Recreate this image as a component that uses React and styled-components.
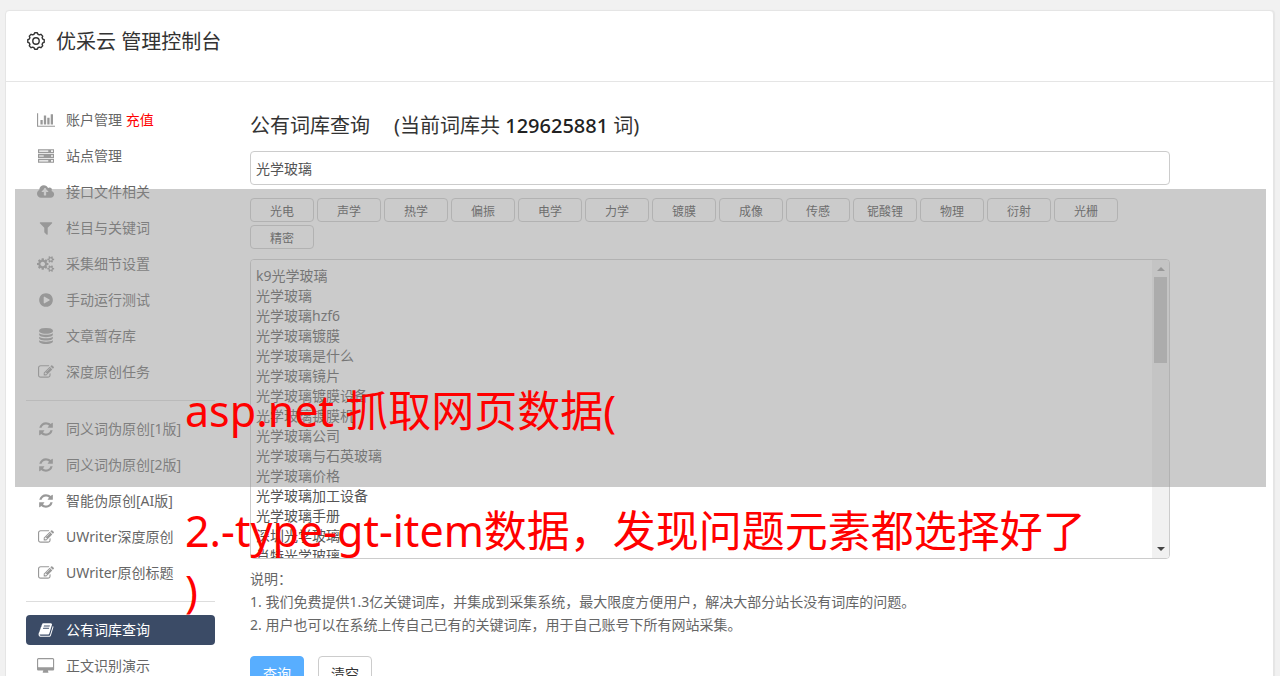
import React from "react";
import styled, { createGlobalStyle, css } from "styled-components";

const GlobalStyle = createGlobalStyle`
  *, *::before, *::after { box-sizing: border-box; }
  body {
    margin: 0;
    background: #f1f1f1;
    color: #666;
    font-family: "Noto Sans", "Noto Sans CJK SC", sans-serif;
    font-size: 14px;
    line-height: 20px;
    font-kerning: none;
  }
  button, input, textarea { font-family: inherit; }
`;

/* ---------- icons ---------- */

const Glyph = styled.svg`
  display: block;
  height: 16px;
  width: auto;
  fill: currentColor;
`;

const PATHS = {
  upload: "M1216 864q0-14-9-23l-352-352q-9-9-23-9t-23 9l-351 351q-10 12-10 24 0 14 9 23t23 9h224v352q0 13 9.5 22.5t22.5 9.5h192q13 0 22.5-9.5t9.5-22.5v-352h224q13 0 22.5-9.5t9.5-22.5zm640 288q0 159-112.5 271.5t-271.5 112.5h-1088q-185 0-316.5-131.5t-131.5-316.5q0-130 70-240t188-165q-2-30-2-43 0-212 150-362t362-150q156 0 285.5 87t188.5 231q71-62 166-62 106 0 181 75t75 181q0 76-41 138 130 31 213.5 135.5t83.5 238.5z",
  filter: "M1595 295q17 41-14 70l-493 493v742q0 42-39 59-13 5-25 5-27 0-45-19l-256-256q-19-19-19-45v-486l-493-493q-31-29-14-70 17-39 59-39h1280q42 0 59 39z",
  cogs: "M832 896q0-106-75-181t-181-75-181 75-75 181 75 181 181 75 181-75 75-181zm768 512q0-52-38-90t-90-38-90 38-38 90q0 53 37.5 90.5t90.5 37.5 90.5-37.5 37.5-90.5zm0-1024q0-52-38-90t-90-38-90 38-38 90q0 53 37.5 90.5t90.5 37.5 90.5-37.5 37.5-90.5zm-384 421v185q0 10-7 19.5t-16 10.5l-155 24q-11 35-32 76 34 48 90 115 7 11 7 20 0 12-7 19-23 30-82.5 89.5t-78.5 59.5q-11 0-21-7l-115-90q-37 19-77 31-11 108-23 155-7 24-30 24h-186q-11 0-20-7.5t-10-17.5l-23-153q-34-10-75-31l-118 89q-7 7-20 7-11 0-21-8-144-133-144-160 0-9 7-19 10-14 41-53t47-61q-23-44-35-82l-152-24q-10-1-17-9.5t-7-19.5v-185q0-10 7-19.5t16-10.5l155-24q11-35 32-76-34-48-90-115-7-11-7-20 0-12 7-20 22-30 82-89t79-59q11 0 21 7l115 90q34-18 77-32 11-108 23-154 7-24 30-24h186q11 0 20 7.5t10 17.5l23 153q34 10 75 31l118-89q8-7 20-7 11 0 21 8 144 133 144 160 0 8-7 19-12 16-42 54t-45 60q23 48 34 82l152 23q10 2 17 10.5t7 19.5zm640 533v140q0 16-149 31-12 27-30 52 51 113 51 138 0 4-4 7-122 71-124 71-8 0-46-47t-52-68q-20 2-30 2t-30-2q-14 21-52 68t-46 47q-2 0-124-71-4-3-4-7 0-25 51-138-18-25-30-52-149-15-149-31v-140q0-16 149-31 13-29 30-52-51-113-51-138 0-4 4-7 4-2 35-20t59-34 30-16q8 0 46 46.5t52 67.5q20-2 30-2t30 2q51-71 92-112l6-2q4 0 124 70 4 3 4 7 0 25-51 138 17 23 30 52 149 15 149 31zm0-1024v140q0 16-149 31-12 27-30 52 51 113 51 138 0 4-4 7-122 71-124 71-8 0-46-47t-52-68q-20 2-30 2t-30-2q-14 21-52 68t-46 47q-2 0-124-71-4-3-4-7 0-25 51-138-18-25-30-52-149-15-149-31v-140q0-16 149-31 13-29 30-52-51-113-51-138 0-4 4-7 4-2 35-20t59-34 30-16q8 0 46 46.5t52 67.5q20-2 30-2t30 2q51-71 92-112l6-2q4 0 124 70 4 3 4 7 0 25-51 138 17 23 30 52 149 15 149 31z",
  play: "M896 128q209 0 385.5 103t279.5 279.5 103 385.5-103 385.5-279.5 279.5-385.5 103-385.5-103-279.5-279.5-103-385.5 103-385.5 279.5-279.5 385.5-103zm384 823q32-18 32-55t-32-55l-544-320q-31-19-64-1-32 19-32 56v640q0 37 32 56 16 8 32 8 17 0 32-9z",
  database: "M896 768q237 0 443-43t325-127v170q0 69-103 128t-280 93.5-385 34.5-385-34.5-280-93.5-103-128v-170q119 84 325 127t443 43zm0 768q237 0 443-43t325-127v170q0 69-103 128t-280 93.5-385 34.5-385-34.5-280-93.5-103-128v-170q119 84 325 127t443 43zm0-384q237 0 443-43t325-127v170q0 69-103 128t-280 93.5-385 34.5-385-34.5-280-93.5-103-128v-170q119 84 325 127t443 43zm0-1152q208 0 385 34.5t280 93.5 103 128v128q0 69-103 128t-280 93.5-385 34.5-385-34.5-280-93.5-103-128v-128q0-69 103-128t280-93.5 385-34.5z",
  edit: "M888 1184l116-116-152-152-116 116v56h96v96h56zm440-720q-16-16-33 1l-350 350q-17 17-1 33t33-1l350-350q17-17 1-33zm80 594v190q0 119-84.5 203.5t-203.5 84.5h-832q-119 0-203.5-84.5t-84.5-203.5v-832q0-119 84.5-203.5t203.5-84.5h832q63 0 117 25 15 7 18 23 3 17-9 29l-49 49q-14 14-32 8-23-6-45-6h-832q-66 0-113 47t-47 113v832q0 66 47 113t113 47h832q66 0 113-47t47-113v-126q0-13 9-22l64-64q15-15 35-7t20 29zm-96-738l288 288-672 672h-288v-288zm444 132l-92 92-288-288 92-92q28-28 68-28t68 28l152 152q28 28 28 68t-28 68z",
  refresh: "M1639 1056q0 5-1 7-64 268-268 434.5t-478 166.5q-146 0-282.5-55t-243.5-157l-129 129q-19 19-45 19t-45-19-19-45v-448q0-26 19-45t45-19h448q26 0 45 19t19 45-19 45l-137 137q71 66 161 102t187 36q134 0 250-65t186-179q11-17 53-117 8-23 30-23h192q13 0 22.5 9.5t9.5 22.5zm25-800v448q0 26-19 45t-45 19h-448q-26 0-45-19t-19-45 19-45l138-138q-148-137-349-137-134 0-250 65t-186 179q-11 17-53 117-8 23-30 23h-199q-13 0-22.5-9.5t-9.5-22.5v-7q65-268 270-434.5t480-166.5q146 0 284 55.5t245 156.5l130-129q19-19 45-19t45 19 19 45z",
  book: "M1703 478q40 57 18 129l-275 906q-19 64-76.5 107.5t-122.5 43.5h-923q-77 0-148.5-53.5t-99.5-131.5q-24-67-2-127 0-4 3-27t4-37q1-8-3-21.5t-3-19.5q2-11 8-21t16.5-23.5 16.5-23.5q23-38 45-91.5t30-91.5q3-10 .5-30t-.5-28q3-11 17-28t17-23q21-36 42-92t25-90q1-9-2.5-32t.5-28q4-13 22-30.5t22-22.5q19-26 42.5-84.5t27.5-96.5q1-8-3-25.5t-2-26.5q2-8 9-18t18-23 17-21q8-12 16.5-30.5t15-35 16-36 19.5-32 26.5-23.5 36-11.5 47.5 5.5l-1 3q38-9 51-9h761q74 0 114 56t18 130l-274 906q-36 119-71.5 153.5t-128.5 34.5h-869q-27 0-38 15-11 16-1 43 24 70 144 70h923q29 0 56-15.5t35-41.5l300-987q7-22 5-57 38 15 59 43zm-1064 2q-4 13 2 22.5t20 9.5h608q13 0 25.5-9.5t16.5-22.5l21-64q4-13-2-22.5t-20-9.5h-608q-13 0-25.5 9.5t-16.5 22.5zm-83 256q-4 13 2 22.5t20 9.5h608q13 0 25.5-9.5t16.5-22.5l21-64q4-13-2-22.5t-20-9.5h-608q-13 0-25.5 9.5t-16.5 22.5z",
  chart: "M0 128h128v1408h1920v128H0zM384 896h256v512H384zM768 384h256v1024H768zM1152 640h256v768h-256zM1536 256h256v1152h-256z",
  server: "M0 128h1792v448H0zM128 288v128h1024V288zM1472 256v192h192V256zM0 672h1792v448H0zM128 832v128h512V832zM1472 800v192h192V800zM0 1216h1792v448H0zM128 1376v128h1024v-128zM1472 1344v192h192v-192z",
  desktop: "M160 0h1600q66 0 113 47t47 113v1088q0 66-47 113t-113 47h-544q0 60 64 165v27q0 64-64 64H704q-64 0-64-64v-27q64-105 64-165H160q-66 0-113-47T0 1248V160q0-66 47-113t113-47zm0 128q-32 0-32 32v832q0 32 32 32h1600q32 0 32-32V160q0-32-32-32z",
};

const BOXES = {
  upload: "-64 0 1920 1792",
  cogs: "-64 0 1920 1792",
  chart: "0 0 2048 1792",
  desktop: "0 0 1920 1792",
};

const Icon = ({ name }) => (
  <Glyph viewBox={BOXES[name] || "0 0 1792 1792"} aria-hidden="true">
    <path d={PATHS[name]} fillRule="evenodd" />
  </Glyph>
);

const GearSvg = styled.svg`
  width: 20px;
  height: 20px;
  fill: none;
  stroke: #333;
  stroke-width: 1.4;
  stroke-linejoin: round;
`;

/* Ring of eight rounded teeth around a small circle. */
const gearPath = (() => {
  const point = (deg, r) => {
    const a = (deg * Math.PI) / 180;
    return `${(10 + r * Math.cos(a)).toFixed(2)} ${(10 + r * Math.sin(a)).toFixed(2)}`;
  };
  let d = "";
  for (let i = 0; i < 8; i += 1) {
    const c = i * 45;
    d += `${i ? "L" : "M"}${point(c - 16, 7)}L${point(c - 9, 8.3)}L${point(c + 9, 8.3)}L${point(c + 16, 7)}`;
  }
  return `${d}Z`;
})();

const Gear = () => (
  <GearSvg viewBox="0 0 20 20" aria-hidden="true">
    <path d={gearPath} />
    <circle cx="10" cy="10" r="3.2" />
  </GearSvg>
);

/* ---------- page frame ---------- */

const Page = styled.div`
  position: relative;
  height: 100vh;
  overflow: hidden;
  padding: 10px 6px 0 5px;
`;

const Panel = styled.div`
  min-height: 100%;
  background: #fff;
  border: 1px solid #e5e5e5;
  border-radius: 4px 4px 0 0;
  box-shadow: 1px 0 1px #e5e5e5;
`;

const Header = styled.header`
  display: flex;
  align-items: center;
  gap: 10px;
  padding: 15px 20px 25px;
  border-bottom: 1px solid #e5e5e5;
`;

const Title = styled.h1`
  margin: 0;
  padding-top: 2px;
  font-size: 20px;
  font-weight: 400;
  line-height: 28px;
  color: #333;
`;

const Columns = styled.div`
  display: flex;
  gap: 35px;
  padding: 23px 103px 0 20px;
`;

/* ---------- side menu ---------- */

const Sidebar = styled.nav`
  flex: 0 0 189px;
`;

const MenuGroup = styled.ul`
  display: flex;
  flex-direction: column;
  gap: 6px;
  margin: 0;
  padding: 0;
  list-style: none;

  & + & {
    margin-top: 13px;
    padding-top: 13px;
    border-top: 1px solid #ddd;
  }
`;

const MenuLink = styled.a`
  display: flex;
  align-items: center;
  gap: 10px;
  height: 30px;
  padding: 0 10px;
  border-radius: 4px;
  color: #666;
  text-decoration: none;
  white-space: nowrap;
  ${(p) => p.$active && css`
    background: #3b4b66;
    color: #fff;
  `}
`;

const IconSlot = styled.span`
  display: flex;
  flex: 0 0 20px;
  justify-content: center;
  color: ${(p) => (p.$active ? "#fff" : "#999")};
`;

const Highlight = styled.span`
  color: #f00;
`;

/* ---------- query area ---------- */

const Main = styled.main`
  flex: 1;
  min-width: 0;
  padding-top: 6px;
`;

const Heading = styled.h2`
  display: flex;
  gap: 24px;
  margin: 0 0 10px;
  font-size: 20px;
  font-weight: 400;
  line-height: 30px;
  color: #333;
`;

const Count = styled.span`
  font-weight: 500;
  color: #222;
`;

const QueryInput = styled.input`
  display: block;
  width: 100%;
  height: 34px;
  padding: 0 5px;
  border: 1px solid #ccc;
  border-radius: 4px;
  background: #fff;
  color: #555;
  font-size: 14px;
  outline: none;
`;

const Tags = styled.div`
  display: flex;
  flex-wrap: wrap;
  gap: 3px;
  margin: 13px 0 10px;
`;

const Tag = styled.button`
  width: 64px;
  height: 24px;
  padding: 4px 0 0;
  border: 1px solid #ccc;
  border-radius: 4px;
  background: #fff;
  color: #444;
  font-size: 12px;
  line-height: 18px;
`;

const ResultBox = styled.div`
  display: flex;
  height: 300px;
  border: 1px solid #ccc;
  border-radius: 4px;
  overflow: hidden;
`;

const ResultText = styled.textarea`
  flex: 1;
  padding: 6px 5px;
  border: 0;
  outline: none;
  resize: none;
  overflow: hidden;
  background: #fff;
  color: #555;
  font-size: 14px;
  line-height: 20px;
`;

const ScrollTrack = styled.div`
  display: flex;
  flex-direction: column;
  align-items: center;
  width: 17px;
  padding: 7px 2px;
  background: #f1f1f1;
`;

const Arrow = styled.span`
  border: 4px solid transparent;
  border-width: ${(p) => (p.$down ? "4px 4px 0" : "0 4px 4px")};
  border-top-color: ${(p) => (p.$down ? "#444" : "transparent")};
  border-bottom-color: ${(p) => (p.$down ? "transparent" : "#999")};
  margin-top: ${(p) => (p.$down ? "auto" : "0")};
`;

const Thumb = styled.span`
  width: 13px;
  height: 86px;
  margin-top: 6px;
  background: #c1c1c1;
`;

const Notes = styled.div`
  margin: 8px 0 20px;
  line-height: 23px;
`;

const NoteLine = styled.p`
  margin: 0;
`;

const Actions = styled.div`
  display: flex;
  gap: 14px;
`;

const ActionButton = styled.button`
  width: 54px;
  height: 34px;
  padding: 0;
  border: 1px solid ${(p) => (p.$primary ? "#58aeff" : "#ccc")};
  border-radius: 4px;
  background: ${(p) => (p.$primary ? "#58aeff" : "#fff")};
  color: ${(p) => (p.$primary ? "#fff" : "#333")};
  font-size: 14px;
`;

/* ---------- caption laid over the page ---------- */

const Shade = styled.div`
  position: absolute;
  top: 189px;
  left: 15px;
  right: 14px;
  height: 298px;
  background: rgba(151, 151, 151, 0.5);
  pointer-events: none;
`;

const Caption = styled.p`
  margin: 192px 0 0 170px;
  color: #f00;
  font-size: 43px;
  line-height: 60px;
  white-space: pre;
`;

const MENU = [
  [
    ["chart", "账户管理", "充值"],
    ["server", "站点管理"],
    ["upload", "接口文件相关"],
    ["filter", "栏目与关键词"],
    ["cogs", "采集细节设置"],
    ["play", "手动运行测试"],
    ["database", "文章暂存库"],
    ["edit", "深度原创任务"],
  ],
  [
    ["refresh", "同义词伪原创[1版]"],
    ["refresh", "同义词伪原创[2版]"],
    ["refresh", "智能伪原创[AI版]"],
    ["edit", "UWriter深度原创"],
    ["edit", "UWriter原创标题"],
  ],
  [
    ["book", "公有词库查询"],
    ["desktop", "正文识别演示"],
  ],
];

const TAGS = ["光电", "声学", "热学", "偏振", "电学", "力学", "镀膜", "成像", "传感", "铌酸锂", "物理", "衍射", "光栅", "精密"];

const RESULTS = [
  "k9光学玻璃",
  "光学玻璃",
  "光学玻璃hzf6",
  "光学玻璃镀膜",
  "光学玻璃是什么",
  "光学玻璃镜片",
  "光学玻璃镀膜设备",
  "光学玻璃镀膜机",
  "光学玻璃公司",
  "光学玻璃与石英玻璃",
  "光学玻璃价格",
  "光学玻璃加工设备",
  "光学玻璃手册",
  "深圳光学玻璃",
  "肖特光学玻璃",
].join("\n");

export default function App() {
  const current = "公有词库查询";
  return (
    <Page>
      <GlobalStyle />
      <Panel>
        <Header>
          <Gear />
          <Title>优采云 管理控制台</Title>
        </Header>
        <Columns>
          <Sidebar>
            {MENU.map((group, i) => (
              <MenuGroup key={i}>
                {group.map(([icon, label, extra]) => (
                  <li key={label}>
                    <MenuLink href="#" $active={label === current}>
                      <IconSlot $active={label === current}>
                        <Icon name={icon} />
                      </IconSlot>
                      <span>
                        {label}
                        {extra && <Highlight> {extra}</Highlight>}
                      </span>
                    </MenuLink>
                  </li>
                ))}
              </MenuGroup>
            ))}
          </Sidebar>
          <Main>
            <Heading>
              <span>公有词库查询</span>
              <span>
                (当前词库共 <Count>129625881</Count> 词)
              </span>
            </Heading>
            <QueryInput aria-label="公有词库查询" defaultValue="光学玻璃" />
            <Tags>
              {TAGS.map((tag) => (
                <Tag key={tag} type="button">{tag}</Tag>
              ))}
            </Tags>
            <ResultBox>
              <ResultText aria-label="查询结果" defaultValue={RESULTS} />
              <ScrollTrack aria-hidden="true">
                <Arrow />
                <Thumb />
                <Arrow $down />
              </ScrollTrack>
            </ResultBox>
            <Notes>
              <NoteLine>说明：</NoteLine>
              <NoteLine>1. 我们免费提供1.3亿关键词库，并集成到采集系统，最大限度方便用户，解决大部分站长没有词库的问题。</NoteLine>
              <NoteLine>2. 用户也可以在系统上传自己已有的关键词库，用于自己账号下所有网站采集。</NoteLine>
            </Notes>
            <Actions>
              <ActionButton type="button" $primary>查询</ActionButton>
              <ActionButton type="button">清空</ActionButton>
            </Actions>
          </Main>
        </Columns>
      </Panel>
      <Shade>
        <Caption>{"asp.net 抓取网页数据(\n\n2.-type-gt-item数据，发现问题元素都选择好了\n)"}</Caption>
      </Shade>
    </Page>
  );
}
